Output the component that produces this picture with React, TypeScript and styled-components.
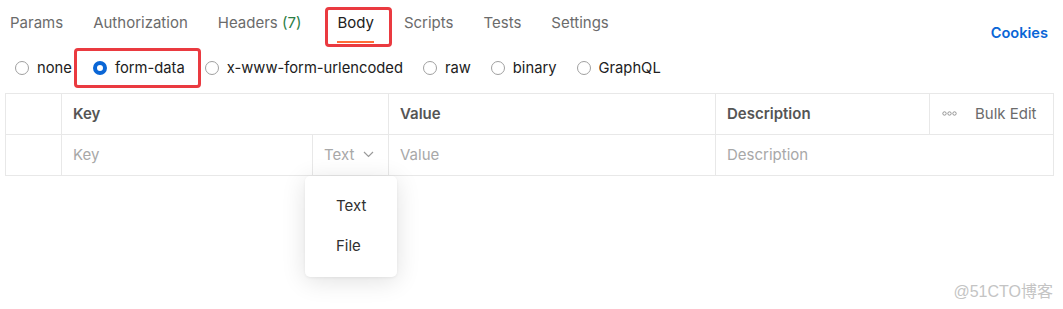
import React from "react";
import styled, { createGlobalStyle } from "styled-components";

const Global = createGlobalStyle`
  html, body { margin: 0; padding: 0; background: #ffffff; }
  body { font-family: Inter, "Noto Sans", "Liberation Sans", sans-serif; -webkit-font-smoothing: antialiased; }
  * { box-sizing: border-box; }
`;

const Page = styled.div`
  position: relative;
  width: 1063px;
  height: 309px;
  background: #fff;
  overflow: hidden;
`;

const TopBar = styled.div`
  display: flex;
  align-items: flex-start;
  justify-content: space-between;
  padding: 0 15px 0 0;
  height: 48px;
`;

const Tabs = styled.div`
  display: flex;
  align-items: flex-start;
`;

const Tab = styled.div<{ $active?: boolean; $first?: boolean }>`
  position: relative;
  padding: 13px 15px 0;
  padding-left: ${(p) => (p.$first ? "10px" : "15px")};
  height: 44px;
  font-size: 15px;
  color: ${(p) => (p.$active ? "#212121" : "#6b6b6b")};
  line-height: 20px;
  white-space: nowrap;
`;

const TabLabel = styled.span<{ $active?: boolean }>`
  position: relative;
  display: inline-block;
  height: 30px;
  border-bottom: 2px solid ${(p) => (p.$active ? "#ff6c37" : "transparent")};
`;

const Count = styled.span`
  color: #2a7d45;
`;

const Annotation = styled.span<{ $t: number; $r: number; $b: number; $l: number }>`
  position: absolute;
  top: ${(p) => p.$t}px;
  right: ${(p) => p.$r}px;
  bottom: ${(p) => p.$b}px;
  left: ${(p) => p.$l}px;
  border: 3px solid #ea3a40;
  border-radius: 4px;
  pointer-events: none;
`;

const Cookies = styled.div`
  margin-top: 24px;
  font-size: 14.6px;
  font-weight: 600;
  color: #0a66d6;
`;

const RadioRow = styled.div`
  display: flex;
  align-items: center;
  height: 38px;
  margin-top: 1px;
  padding-left: 15px;
`;

const RadioItem = styled.label`
  position: relative;
  display: flex;
  align-items: center;
  gap: 8px;
  margin-right: 20px;
  font-size: 14.75px;
  color: #212121;
  white-space: nowrap;
`;

const RadioDot = styled.span<{ $checked?: boolean }>`
  display: inline-block;
  width: 14px;
  height: 14px;
  border-radius: 50%;
  border: ${(p) => (p.$checked ? "4px solid #0a66d6" : "1px solid #a0a0a0")};
  background: #fff;
`;

const TableWrap = styled.div`
  position: relative;
  margin: 6px 0 0 5px;
  width: 1049px;
`;

const Grid = styled.div`
  display: grid;
  grid-template-columns: 55px 250px 75px 326px 213px 123px;
  grid-auto-rows: 40px;
  gap: 1px;
  padding: 1px;
  background: #e8e8e8;
`;

const Cell = styled.div<{ $span?: number; $head?: boolean; $placeholder?: boolean }>`
  grid-column: span ${(p) => p.$span ?? 1};
  background: #fff;
  display: flex;
  align-items: center;
  padding: 0 11px 2px;
  font-size: 15px;
  font-weight: ${(p) => (p.$head ? 600 : 400)};
  color: ${(p) => (p.$head ? "#555555" : p.$placeholder ? "#a8a8a8" : "#212121")};
`;

const TypeCell = styled(Cell)`
  gap: 9px;
`;

const BulkCell = styled(Cell)`
  font-weight: 400;
  color: #6b6b6b;
  gap: 18px;
  padding-left: 12px;
`;

const Menu = styled.div`
  position: absolute;
  left: 300px;
  top: 83px;
  width: 92px;
  height: 101px;
  background: #fff;
  border-radius: 5px;
  box-shadow: 0 4px 24px rgba(0, 0, 0, 0.12), 0 1px 3px rgba(0, 0, 0, 0.06);
  display: flex;
  flex-direction: column;
  justify-content: center;
  gap: 19px;
  padding: 0 0 2px 31px;
`;

const MenuItem = styled.div`
  font-size: 15px;
  color: #303030;
  line-height: 21px;
`;

const Watermark = styled.div`
  position: absolute;
  right: 10px;
  bottom: 7px;
  font-family: "Liberation Sans", "Noto Sans CJK SC", sans-serif;
  font-size: 16px;
  color: #c4c4c4;
`;

const Chevron = () => (
  <svg width="11" height="7" viewBox="0 0 11 7" fill="none">
    <path d="M1 1l4.5 4.5L10 1" stroke="#9a9a9a" strokeWidth="1.2" />
  </svg>
);

const Dots = () => (
  <svg width="15" height="5" viewBox="0 0 15 5" fill="none">
    <circle cx="2.5" cy="2.5" r="1.7" stroke="#8a8a8a" strokeWidth="0.9" />
    <circle cx="7.5" cy="2.5" r="1.7" stroke="#8a8a8a" strokeWidth="0.9" />
    <circle cx="12.5" cy="2.5" r="1.7" stroke="#8a8a8a" strokeWidth="0.9" />
  </svg>
);

const radios = ["none", "form-data", "x-www-form-urlencoded", "raw", "binary", "GraphQL"];

export default function App() {
  return (
    <Page>
      <Global />
      <TopBar>
        <Tabs>
          <Tab $first>Params</Tab>
          <Tab>Authorization</Tab>
          <Tab>
            Headers <Count>(7)</Count>
          </Tab>
          <Tab $active style={{ paddingLeft: 21, paddingRight: 15 }}>
            <TabLabel $active>Body</TabLabel>
            <Annotation $t={7} $r={-3} $b={-3} $l={9} />
          </Tab>
          <Tab>Scripts</Tab>
          <Tab>Tests</Tab>
          <Tab>Settings</Tab>
        </Tabs>
        <Cookies>Cookies</Cookies>
      </TopBar>
      <RadioRow>
        {radios.map((r) => (
          <RadioItem key={r} style={r === "none" ? { marginRight: 21 } : undefined}>
            <RadioDot $checked={r === "form-data"} />
            {r}
            {r === "form-data" && <Annotation $t={-11} $r={-16} $b={-11} $l={-19} />}
          </RadioItem>
        ))}
      </RadioRow>
      <TableWrap>
        <Grid>
          <Cell />
          <Cell $span={2} $head>Key</Cell>
          <Cell $head>Value</Cell>
          <Cell $head>Description</Cell>
          <BulkCell>
            <Dots />
            Bulk Edit
          </BulkCell>
          <Cell />
          <Cell $placeholder>Key</Cell>
          <TypeCell $placeholder>
            Text
            <Chevron />
          </TypeCell>
          <Cell $placeholder>Value</Cell>
          <Cell $span={2} $placeholder>Description</Cell>
        </Grid>
        <Menu>
          <MenuItem>Text</MenuItem>
          <MenuItem>File</MenuItem>
        </Menu>
      </TableWrap>
      <Watermark>@51CTO博客</Watermark>
    </Page>
  );
}
